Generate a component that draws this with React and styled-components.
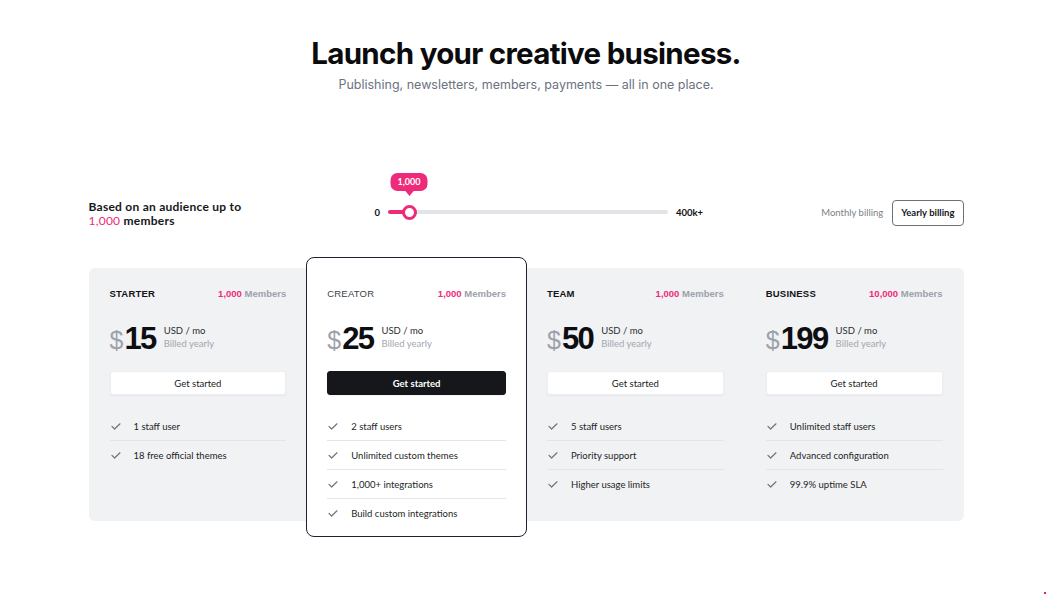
import React from 'react';
import styled, { createGlobalStyle } from 'styled-components';

const PINK = '#ee2a7b';

const Global = createGlobalStyle`
  html, body { margin: 0; padding: 0; background: #ffffff; }
  body { font-family: "Lato", "Noto Sans", sans-serif; color: #111318; }
  * { box-sizing: border-box; }
`;

const Page = styled.main`
  width: 875px;
  margin: 0 auto;
  padding: 35px 0 40px;
`;

const Hero = styled.header`
  text-align: center;
`;

const Title = styled.h1`
  margin: 0;
  font-family: "Inter", sans-serif;
  font-weight: 700;
  font-size: 29.5px;
  line-height: 36px;
  letter-spacing: -0.7px;
  color: #0b0b0d;
`;

const Subtitle = styled.p`
  margin: 5px 0 0;
  font-family: "Inter", sans-serif;
  font-size: 12.5px;
  line-height: 18px;
  color: #6b7280;
`;

const Controls = styled.section`
  display: flex;
  align-items: center;
  margin-top: 103px;
  height: 30px;
`;

const Audience = styled.div`
  width: 286px;
  font-size: 12px;
  line-height: 14px;
  font-weight: 700;
  letter-spacing: 0.25px;
  color: #15171c;
  padding-top: 3px;
`;

const Pink = styled.span`
  color: ${PINK};
  font-weight: ${(p) => (p.$bold ? 700 : 400)};
`;

const SliderGroup = styled.div`
  display: flex;
  align-items: center;
  gap: 8px;
  font-size: 9.5px;
  font-weight: 700;
  color: #111;
`;

const Track = styled.div`
  position: relative;
  width: 280px;
  height: 4px;
  border-radius: 2px;
  background: #e3e4e7;
`;

const Fill = styled.div`
  position: absolute;
  left: 0;
  top: 0;
  bottom: 0;
  border-radius: 2px;
  background: ${PINK};
`;

const Thumb = styled.div`
  position: absolute;
  top: 50%;
  width: 15px;
  height: 15px;
  margin: -7.5px 0 0 -7.5px;
  border-radius: 50%;
  background: #fff;
  border: 3px solid ${PINK};
`;

const Bubble = styled.div`
  position: absolute;
  bottom: 23px;
  transform: translateX(-50%);
  width: 37px;
  height: 18px;
  border-radius: 7px;
  background: ${PINK};
  color: #fff;
  font-size: 9px;
  font-weight: 700;
  line-height: 18px;
  text-align: center;
  &::after {
    content: '';
    position: absolute;
    left: 50%;
    bottom: -5px;
    margin-left: -5px;
    border-left: 5px solid transparent;
    border-right: 5px solid transparent;
    border-top: 6px solid ${PINK};
  }
`;

const Billing = styled.div`
  margin-left: auto;
  display: flex;
  align-items: center;
  gap: 8px;
  padding-top: 1px;
`;

const BillingOption = styled.button`
  font-family: inherit;
  font-size: 9.5px;
  height: 26px;
  padding: ${(p) => (p.$active ? '0 8px' : '0')};
  border-radius: 4px;
  background: #fff;
  cursor: pointer;
  border: 1px solid ${(p) => (p.$active ? '#6b6f78' : 'transparent')};
  color: ${(p) => (p.$active ? '#15171c' : '#7a7f89')};
  font-weight: ${(p) => (p.$active ? 700 : 400)};
`;

const Plans = styled.section`
  display: grid;
  grid-template-columns: repeat(4, 1fr);
  margin-top: 41px;
  background: #f1f2f4;
  border-radius: 6px;
`;

const Card = styled.article`
  display: flex;
  flex-direction: column;
  padding: ${(p) => (p.$featured ? '29px 20px 9px' : '19px 21px 9px')};
  ${(p) =>
    p.$featured &&
    `
    background: #ffffff;
    border: 1px solid #1d2230;
    border-radius: 8px;
    margin: -11px -1px -16px -1px;
  `}
`;

const CardHead = styled.div`
  display: flex;
  justify-content: space-between;
  align-items: center;
  height: 12px;
  font-family: "Liberation Sans", Arial, sans-serif;
  font-size: 9.5px;
  font-weight: 700;
`;

const PlanName = styled.span`
  color: ${(p) => (p.$featured ? '#3b3f47' : '#121317')};
  font-weight: ${(p) => (p.$featured ? 400 : 700)};
  letter-spacing: 0.2px;
`;

const Members = styled.span`
  color: #9ca1aa;
`;

const PriceRow = styled.div`
  display: flex;
  align-items: center;
  margin-top: 24px;
  height: 32px;
`;

const Amount = styled.div`
  font-family: "Liberation Sans", Arial, sans-serif;
  font-size: 31px;
  line-height: 32px;
  font-weight: 700;
  letter-spacing: -1.6px;
  color: #0d0e12;
`;

const Dollar = styled.span`
  font-weight: 400;
  font-size: 25px;
  color: #9da1a9;
  letter-spacing: 0;
  margin-right: 1px;
`;

const PriceMeta = styled.div`
  margin-left: 8px;
  font-size: 9.5px;
  line-height: 13px;
  color: #2a2d33;
  padding-bottom: 4px;
`;

const Muted = styled.div`
  color: #a3a7ae;
`;

const CTA = styled.button`
  margin-top: 16px;
  height: 24px;
  width: 100%;
  border-radius: 3px;
  font-family: inherit;
  font-size: 9.5px;
  cursor: pointer;
  border: ${(p) => (p.$dark ? '1px solid #16171b' : '1px solid #eceef1')};
  background: ${(p) => (p.$dark ? '#16171b' : '#ffffff')};
  color: ${(p) => (p.$dark ? '#ffffff' : '#1a1c21')};
  font-weight: ${(p) => (p.$dark ? 700 : 400)};
  box-shadow: 0 1px 2px rgba(15, 20, 30, 0.05);
`;

const Features = styled.ul`
  list-style: none;
  margin: 17px 0 0;
  padding: 0;
`;

const Feature = styled.li`
  display: flex;
  align-items: center;
  gap: 13px;
  height: 29px;
  padding-left: 1px;
  font-size: 9.5px;
  color: #1d1f24;
  & + & {
    border-top: 1px solid ${(p) => (p.$featured ? '#e3e5e8' : '#d9dbdf')};
  }
  &:first-child {
    height: 28px;
  }
`;

const Dot = styled.div`
  position: fixed;
  right: 6px;
  bottom: 3px;
  width: 2px;
  height: 2px;
  background: #e0245e;
`;

const Check = () => (
  <svg width="10" height="7" viewBox="0 0 10 7" fill="none">
    <path d="M1 3.4 L3.6 6 L9 0.8" stroke="#6f737b" strokeWidth="1.2" strokeLinecap="round" strokeLinejoin="round" />
  </svg>
);

const plans = [
  { name: 'STARTER', members: '1,000', price: 15, features: ['1 staff user', '18 free official themes'] },
  {
    name: 'CREATOR',
    members: '1,000',
    price: 25,
    featured: true,
    features: ['2 staff users', 'Unlimited custom themes', '1,000+ integrations', 'Build custom integrations'],
  },
  { name: 'TEAM', members: '1,000', price: 50, features: ['5 staff users', 'Priority support', 'Higher usage limits'] },
  {
    name: 'BUSINESS',
    members: '10,000',
    price: 199,
    features: ['Unlimited staff users', 'Advanced configuration', '99.9% uptime SLA'],
  },
];

export default function App() {
  const pct = 7.5;
  return (
    <>
      <Global />
      <Page>
        <Hero>
          <Title>Launch your creative business.</Title>
          <Subtitle>Publishing, newsletters, members, payments — all in one place.</Subtitle>
        </Hero>

        <Controls>
          <Audience>
            Based on an audience up to
            <br />
            <Pink>1,000</Pink> members
          </Audience>
          <SliderGroup>
            <span>0</span>
            <Track>
              <Fill style={{ width: `${pct}%` }} />
              <Bubble style={{ left: `${pct}%` }}>1,000</Bubble>
              <Thumb style={{ left: `${pct}%` }} />
            </Track>
            <span>400k+</span>
          </SliderGroup>
          <Billing>
            <BillingOption>Monthly billing</BillingOption>
            <BillingOption $active>Yearly billing</BillingOption>
          </Billing>
        </Controls>

        <Plans>
          {plans.map((p) => (
            <Card key={p.name} $featured={p.featured}>
              <CardHead>
                <PlanName $featured={p.featured}>{p.name}</PlanName>
                <span>
                  <Pink $bold>{p.members}</Pink> <Members>Members</Members>
                </span>
              </CardHead>
              <PriceRow>
                <Amount>
                  <Dollar>$</Dollar>
                  {p.price}
                </Amount>
                <PriceMeta>
                  <div>USD / mo</div>
                  <Muted>Billed yearly</Muted>
                </PriceMeta>
              </PriceRow>
              <CTA $dark={p.featured}>Get started</CTA>
              <Features>
                {p.features.map((f) => (
                  <Feature key={f} $featured={p.featured}>
                    <Check />
                    {f}
                  </Feature>
                ))}
              </Features>
            </Card>
          ))}
        </Plans>
      </Page>
      <Dot />
    </>
  );
}
